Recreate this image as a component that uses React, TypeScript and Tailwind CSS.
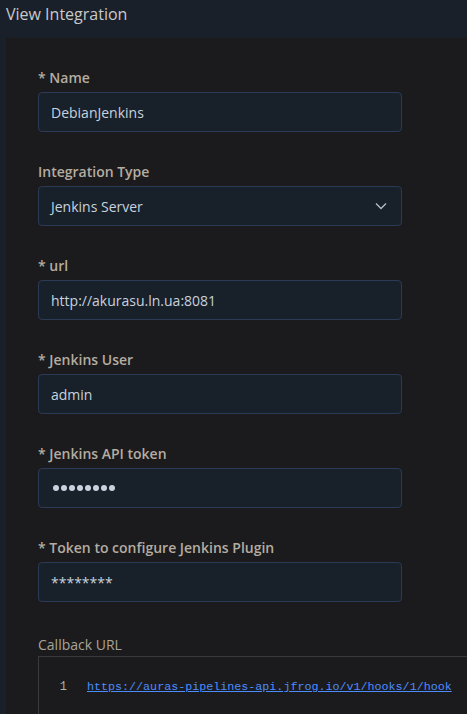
import React from "react";

const fields: { label: string; value: string; select?: boolean; dots?: boolean }[] = [
  { label: "* Name", value: "DebianJenkins" },
  { label: "Integration Type", value: "Jenkins Server", select: true },
  { label: "* url", value: "http://akurasu.ln.ua:8081" },
  { label: "* Jenkins User", value: "admin" },
  { label: "* Jenkins API token", value: "", dots: true },
  { label: "* Token to configure Jenkins Plugin", value: "********" },
];

export default function App() {
  return (
    <div
      className="w-[467px] h-[714px] overflow-hidden bg-[#19202a] flex flex-col"
      style={{ fontFamily: '"Open Sans", "Noto Sans", sans-serif' }}
    >
      <div className="h-[38px] shrink-0 pl-[6px] pt-[2px] text-[16px] leading-[24px] text-[#c9c9c9]">
        View Integration
      </div>
      <div className="flex-1 ml-[6px] bg-[#1b1b1d] pl-[32px] pt-[30px]">
        {fields.map((f, i) => (
          <div key={i} className="mb-[30px]">
            <div className="h-[20px] leading-[20px] text-[14px] font-semibold text-[#b4aca1] mb-[4px]">
              {f.label}
            </div>
            <div className="w-[364px] h-[40px] rounded-[4px] border border-[#2c3a57] bg-[#18202a] flex items-center justify-between pl-[14px] pr-[14px]">
              {f.dots ? (
                <span className="flex gap-[2px]">
                  {[0, 1, 2, 3, 4, 5, 6, 7].map((d) => (
                    <span key={d} className="w-[6px] h-[6px] rounded-full bg-[#c7d2de]" />
                  ))}
                </span>
              ) : (
                <span className="-ml-[2px] text-[14px] text-[#c7d2de]">{f.value}</span>
              )}
              {f.select && (
                <svg width="12" height="8" viewBox="0 0 12 8" fill="none">
                  <path d="M1 1.5L6 6.5L11 1.5" stroke="#b8bcc2" strokeWidth="1.3" />
                </svg>
              )}
            </div>
          </div>
        ))}
        <div className="pt-[3px]">
          <div className="h-[20px] leading-[20px] text-[14px] text-[#a9a398] mb-[1px]">Callback URL</div>
          <div className="w-[500px] h-[80px] border border-[#3a3a3c] bg-[#1b1b1d] pt-[21px] flex">
            <span
              className="w-[48px] text-right pr-[20px] text-[12px] leading-[18px] text-[#9fb7a8]"
              style={{ fontFamily: '"Liberation Mono", monospace' }}
            >
              1
            </span>
            <a
              className="text-[11.7px] leading-[18px] text-[#4b8dff] underline"
              style={{ fontFamily: '"Liberation Mono", monospace' }}
            >
              https://auras-pipelines-api.jfrog.io/v1/hooks/1/hook
            </a>
          </div>
        </div>
      </div>
    </div>
  );
}
